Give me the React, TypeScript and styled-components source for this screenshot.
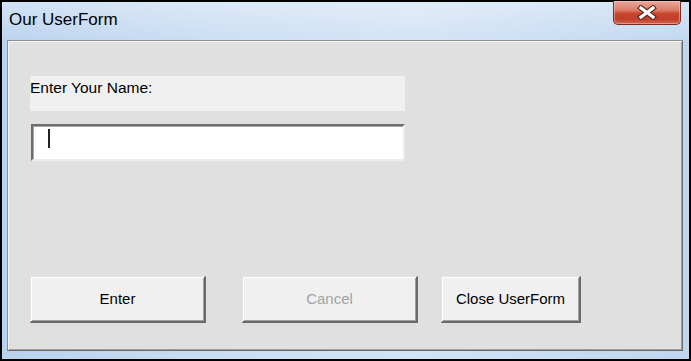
import React from "react";
import styled, { createGlobalStyle } from "styled-components";

const Global = createGlobalStyle`
  html, body { margin: 0; padding: 0; background: #ffffff; }
  * { box-sizing: border-box; }
`;

const Window = styled.div`
  width: 691px;
  height: 361px;
  border: 2px solid #000;
  display: flex;
  flex-direction: column;
  padding: 0 6px 8px 5px;
  background: linear-gradient(to right, #b9d2ee 0%, #c9ddf3 30%, #d2e3f6 60%, #bfd6f0 100%);
  font-family: "Liberation Sans", Arial, sans-serif;
`;

const TitleBar = styled.div`
  height: 38px;
  display: flex;
  align-items: flex-start;
  background: linear-gradient(to bottom, rgba(255,255,255,0.35), rgba(255,255,255,0.05));
  margin: 0 -6px 0 -5px;
  padding: 0 8px 0 7px;
`;

const Title = styled.div`
  font-family: "Liberation Sans", Arial, sans-serif;
  font-size: 17px;
  color: #000;
  margin-top: 8px;
`;

const CloseButton = styled.div`
  margin-left: auto;
  width: 68px;
  height: 24px;
  margin-top: -1px;
  border: 1px solid #7a2c22;
  border-top: none;
  border-radius: 0 0 5px 5px;
  background: linear-gradient(to bottom, #e9a99b 0%, #dd7c69 40%, #c9442c 55%, #c0402b 80%, #d4664e 100%);
  display: flex;
  align-items: center;
  justify-content: center;
  box-shadow: inset 0 0 0 1px rgba(255, 200, 190, 0.5);
`;

const Client = styled.div`
  flex: 1;
  display: flex;
  flex-direction: column;
  background: #e0e0e0;
  border-top: 1px solid #8c9096;
  border-left: 1px solid #8c9096;
  border-right: 1px solid #6a6a6a;
  border-bottom: 1px solid #6a6a6a;
  box-shadow: inset 1px 1px 0 #f4f4f4, inset -1px -1px 0 #a0a0a0;
  padding: 35px 0 27px 22px;
`;

const Label = styled.div`
  width: 375px;
  height: 35px;
  background: #f0f0f0;
  font-size: 15.5px;
  color: #000;
  padding: 3px 0 0 0;
`;

const TextBox = styled.div`
  position: relative;
  width: 374px;
  height: 37px;
  margin-top: 13px;
  margin-left: 1px;
  background: #fff;
  border-top: 2px solid #6e6e6e;
  border-left: 2px solid #6e6e6e;
  border-right: 2px solid #ececec;
  border-bottom: 2px solid #ececec;
  box-shadow: inset 1px 1px 0 #a6a6a6;
`;

const Caret = styled.div`
  position: absolute;
  left: 15px;
  top: 3px;
  width: 2px;
  height: 19px;
  background: #222;
`;

const ButtonRow = styled.div`
  margin-top: auto;
  display: flex;
  align-items: flex-start;
`;

const Button = styled.div<{ $w: number; $ml: number; $disabled?: boolean }>`
  width: ${(p) => p.$w}px;
  height: 47px;
  margin-left: ${(p) => p.$ml}px;
  background: #f0f0f0;
  border-top: 1px solid #e3e3e3;
  border-left: 1px solid #e3e3e3;
  border-right: 2px solid #6a6a6a;
  border-bottom: 2px solid #6a6a6a;
  box-shadow: inset 1px 1px 0 #ffffff, inset -1px -1px 0 #a0a0a0;
  display: flex;
  align-items: center;
  justify-content: center;
  font-size: 15px;
  color: ${(p) => (p.$disabled ? "#a3a3a3" : "#000")};
  padding-bottom: 1px;
`;

function CloseX() {
  return (
    <svg width="20" height="15" viewBox="0 0 20 15">
      <g strokeLinecap="square">
        <path d="M4 3 L16 12 M16 3 L4 12" stroke="#5a2a24" strokeWidth="5.5" />
        <path d="M4 3 L16 12 M16 3 L4 12" stroke="#ffffff" strokeWidth="3.2" />
      </g>
    </svg>
  );
}

export default function App() {
  return (
    <>
      <Global />
      <Window>
        <TitleBar>
          <Title>Our UserForm</Title>
          <CloseButton>
            <CloseX />
          </CloseButton>
        </TitleBar>
        <Client>
          <Label>Enter Your Name:</Label>
          <TextBox>
            <Caret />
          </TextBox>
          <ButtonRow>
            <Button $w={176} $ml={0}>Enter</Button>
            <Button $w={176} $ml={36} $disabled>Cancel</Button>
            <Button $w={140} $ml={23}>Close UserForm</Button>
          </ButtonRow>
        </Client>
      </Window>
    </>
  );
}
